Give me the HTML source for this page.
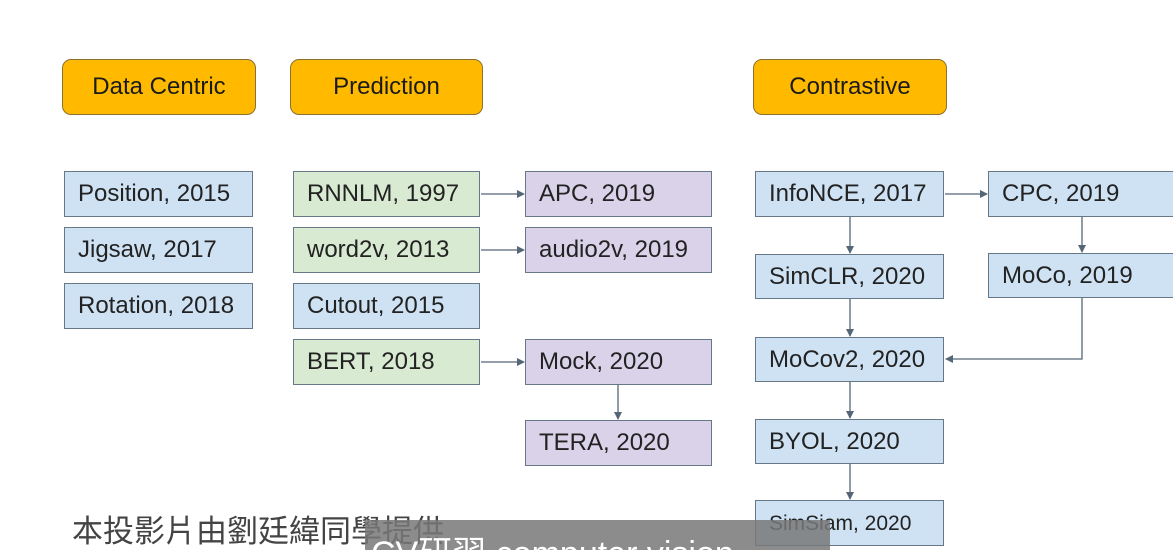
<!DOCTYPE html><html><head><meta charset="utf-8"><style>
html,body{margin:0;width:1173px;height:550px;overflow:hidden}
body{background:#fff;position:relative;font-family:"Liberation Sans",sans-serif}
.b{position:absolute;box-sizing:border-box;border:1.5px solid #667788;font-size:24px;color:#222;padding-left:13px;display:flex;align-items:center;line-height:1}
.h{position:absolute;box-sizing:border-box;border:1.5px solid #8a7030;border-radius:9px;background:#FFBA00;font-size:24px;color:#1a1a1a;display:flex;align-items:center;justify-content:center}
.bl{background:#CFE2F3}.gr{background:#D9EAD3}.pu{background:#D9D2E9}
svg{position:absolute;left:0;top:0}
</style></head><body>
<div class="h" style="left:62px;top:59px;width:194px;height:56px">Data Centric</div>
<div class="h" style="left:290px;top:59px;width:193px;height:56px">Prediction</div>
<div class="h" style="left:753px;top:59px;width:194px;height:56px">Contrastive</div>

<div class="b bl" style="left:64px;top:171px;width:189px;height:46px">Position, 2015</div>
<div class="b bl" style="left:64px;top:227px;width:189px;height:46px">Jigsaw, 2017</div>
<div class="b bl" style="left:64px;top:283px;width:189px;height:46px">Rotation, 2018</div>

<div class="b gr" style="left:293px;top:171px;width:187px;height:46px">RNNLM, 1997</div>
<div class="b gr" style="left:293px;top:227px;width:187px;height:46px">word2v, 2013</div>
<div class="b bl" style="left:293px;top:283px;width:187px;height:46px">Cutout, 2015</div>
<div class="b gr" style="left:293px;top:339px;width:187px;height:46px">BERT, 2018</div>

<div class="b pu" style="left:525px;top:171px;width:187px;height:46px">APC, 2019</div>
<div class="b pu" style="left:525px;top:227px;width:187px;height:46px">audio2v, 2019</div>
<div class="b pu" style="left:525px;top:339px;width:187px;height:46px">Mock, 2020</div>
<div class="b pu" style="left:525px;top:420px;width:187px;height:46px">TERA, 2020</div>

<div class="b bl" style="left:755px;top:171px;width:189px;height:46px">InfoNCE, 2017</div>
<div class="b bl" style="left:755px;top:254px;width:189px;height:45px">SimCLR, 2020</div>
<div class="b bl" style="left:755px;top:337px;width:189px;height:45px">MoCov2, 2020</div>
<div class="b bl" style="left:755px;top:419px;width:189px;height:45px">BYOL, 2020</div>
<div class="b bl" style="left:755px;top:500px;width:189px;height:46px;font-size:21px">SimSiam, 2020</div>

<div class="b bl" style="left:988px;top:171px;width:200px;height:46px">CPC, 2019</div>
<div class="b bl" style="left:988px;top:253px;width:200px;height:45px">MoCo, 2019</div>

<svg width="1173" height="550">
<defs><marker id="a" markerWidth="8" markerHeight="8" refX="7" refY="4" orient="auto" markerUnits="userSpaceOnUse"><path d="M0,0L8,4L0,8z" fill="#556677"/></marker></defs>
<g stroke="#556677" stroke-width="1.3" fill="none" marker-end="url(#a)">
<path d="M481,194H524"/><path d="M481,250H524"/><path d="M481,362H524"/>
<path d="M618,385V419"/>
<path d="M945,194H987"/>
<path d="M850,217V253"/><path d="M850,299V336"/><path d="M850,382V418"/><path d="M850,464V499"/>
<path d="M1082,217V252"/>
<path d="M1082,298V359H946"/>
</g></svg>

<div style="position:absolute;left:72px;top:514px;height:36px;overflow:hidden;font-size:31px;line-height:36px;color:#444;white-space:nowrap;font-family:'Liberation Sans','Noto Sans CJK TC',sans-serif">本投影片由劉廷緯同學提供</div>
<div style="position:absolute;left:365px;top:520px;width:465px;height:30px;background:rgba(120,120,120,0.85);overflow:hidden"><div style="position:absolute;left:6px;top:14px;font-size:34px;line-height:40px;color:#fff;white-space:nowrap;font-family:'Liberation Sans','Noto Sans CJK TC',sans-serif">CV研習 computer vision</div></div>
</body></html>
